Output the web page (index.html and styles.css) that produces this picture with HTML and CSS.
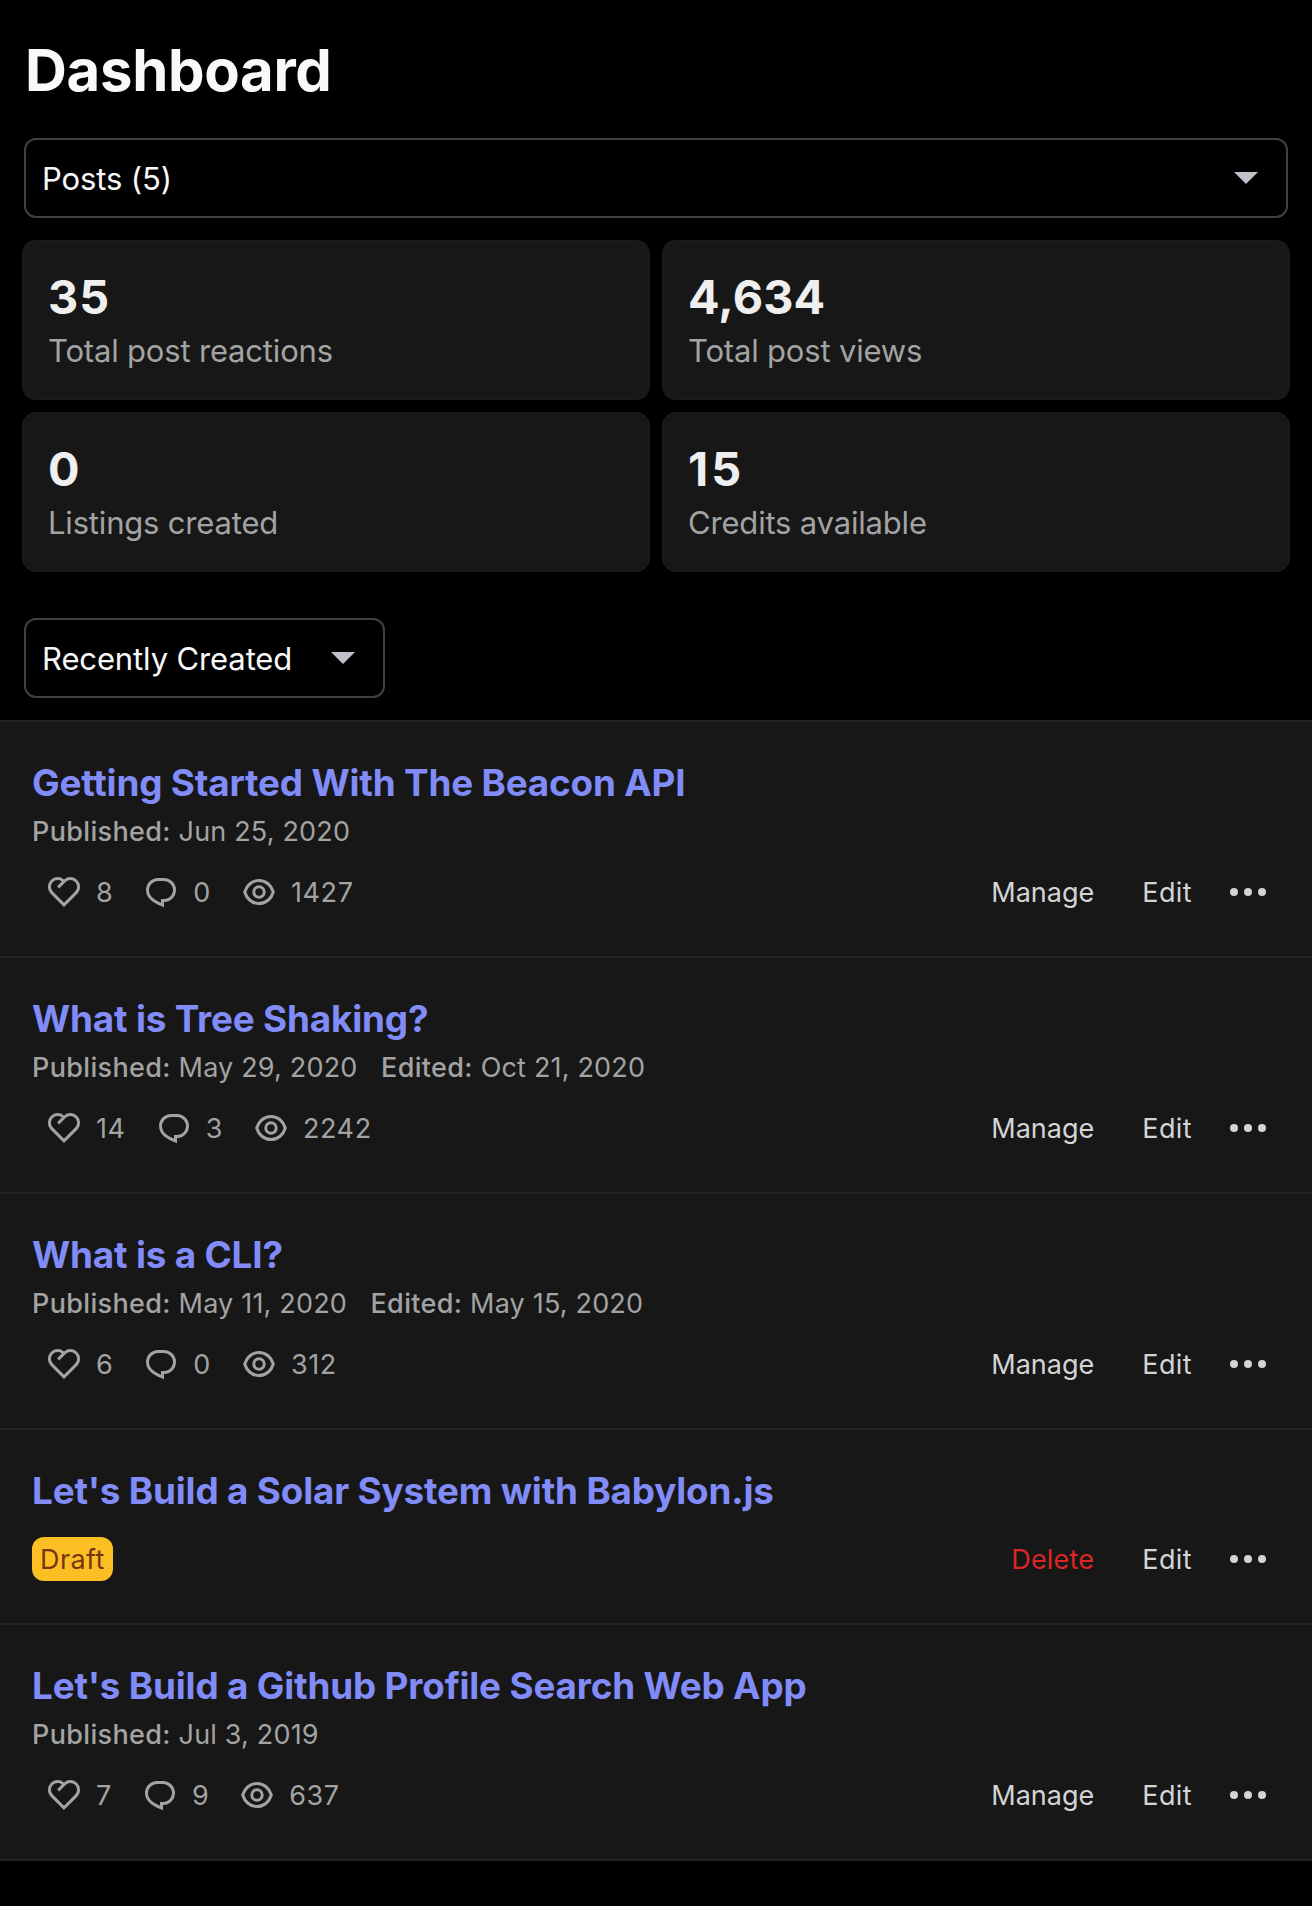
FILE: index.html
```html
<!DOCTYPE html>
<html lang="en">
<head>
<meta charset="utf-8">
<title>Dashboard</title>
<link rel="stylesheet" href="styles.css">
</head>
<body>
<svg class="sprite" width="0" height="0" aria-hidden="true">
  <symbol id="heart" viewBox="0 0 24 24"><path d="M18.884 12.595l.01.011L12 19.5l-6.894-6.894.01-.01A4.875 4.875 0 0112 5.73a4.875 4.875 0 016.884 6.865zM6.431 7.037a3.375 3.375 0 000 4.773L12 17.38l5.569-5.569a3.375 3.375 0 10-4.773-4.773L9.613 10.22l-1.06-1.062 2.371-2.372a3.375 3.375 0 00-4.492.25v.001z"/></symbol>
  <symbol id="comment" viewBox="0 0 24 24"><path d="M10.5 5h3a6 6 0 110 12v2.625c-3.75-1.5-9-3.75-9-8.625a6 6 0 016-6zM12 15.5h1.5a4.501 4.501 0 001.722-8.657A4.5 4.5 0 0013.5 6.5h-3A4.5 4.5 0 006 11c0 2.707 1.846 4.475 6 6.36V15.5z"/></symbol>
  <symbol id="eye" viewBox="0 0 24 24"><g fill="none" stroke="currentColor" stroke-width="1.5"><path d="M4.85 12C5.8 8.7 8.5 6.25 12 6.25S18.2 8.7 19.15 12C18.2 15.3 15.5 17.75 12 17.75S5.8 15.3 4.85 12z"/><circle cx="12" cy="12" r="2.6"/></g></symbol>
  <symbol id="dots" viewBox="0 0 36 8"><circle cx="4" cy="4" r="4"/><circle cx="18" cy="4" r="4"/><circle cx="32" cy="4" r="4"/></symbol>
  <symbol id="caret" viewBox="0 0 24 12"><path d="M0 0h24L12 12z"/></symbol>
</svg>
<header class="header">
  <h1 class="heading">Dashboard</h1>
  <div class="select"><span>Posts (5)</span><svg class="caret"><use href="#caret"/></svg></div>
</header>
<section class="stats">
  <div class="card"><div class="value value-wide">35</div><div class="label">Total post reactions</div></div>
  <div class="card"><div class="value">4,634</div><div class="label">Total post views</div></div>
  <div class="card"><div class="value">0</div><div class="label">Listings created</div></div>
  <div class="card"><div class="value value-wider">15</div><div class="label">Credits available</div></div>
</section>
<div class="sorting"><div class="select select-sort"><span>Recently Created</span><svg class="caret"><use href="#caret"/></svg></div></div>
<main class="list">
  <article class="row">
    <h2 class="title">Getting Started With The Beacon API</h2>
    <p class="dates"><span><b>Published:</b> Jun 25, 2020</span></p>
    <div class="foot">
      <div class="metrics"><span class="metric"><svg class="icon"><use href="#heart"/></svg>8</span><span class="metric"><svg class="icon"><use href="#comment"/></svg>0</span><span class="metric"><svg class="icon"><use href="#eye"/></svg>1427</span></div>
      <div class="actions"><a>Manage</a><a class="edit">Edit</a><svg class="dots"><use href="#dots"/></svg></div>
    </div>
  </article>
  <article class="row">
    <h2 class="title">What is Tree Shaking?</h2>
    <p class="dates"><span><b>Published:</b> May 29, 2020</span><span><b>Edited:</b> Oct 21, 2020</span></p>
    <div class="foot">
      <div class="metrics"><span class="metric"><svg class="icon"><use href="#heart"/></svg>14</span><span class="metric"><svg class="icon"><use href="#comment"/></svg>3</span><span class="metric"><svg class="icon"><use href="#eye"/></svg>2242</span></div>
      <div class="actions"><a>Manage</a><a class="edit">Edit</a><svg class="dots"><use href="#dots"/></svg></div>
    </div>
  </article>
  <article class="row">
    <h2 class="title">What is a CLI?</h2>
    <p class="dates"><span><b>Published:</b> May 11, 2020</span><span><b>Edited:</b> May 15, 2020</span></p>
    <div class="foot">
      <div class="metrics"><span class="metric"><svg class="icon"><use href="#heart"/></svg>6</span><span class="metric"><svg class="icon"><use href="#comment"/></svg>0</span><span class="metric"><svg class="icon"><use href="#eye"/></svg>312</span></div>
      <div class="actions"><a>Manage</a><a class="edit">Edit</a><svg class="dots"><use href="#dots"/></svg></div>
    </div>
  </article>
  <article class="row row-draft">
    <h2 class="title">Let's Build a Solar System with Babylon.js</h2>
    <div class="foot">
      <span class="badge">Draft</span>
      <div class="actions"><a class="delete">Delete</a><a class="edit">Edit</a><svg class="dots"><use href="#dots"/></svg></div>
    </div>
  </article>
  <article class="row">
    <h2 class="title">Let's Build a Github Profile Search Web App</h2>
    <p class="dates"><span><b>Published:</b> Jul 3, 2019</span></p>
    <div class="foot">
      <div class="metrics"><span class="metric"><svg class="icon"><use href="#heart"/></svg>7</span><span class="metric"><svg class="icon"><use href="#comment"/></svg>9</span><span class="metric"><svg class="icon"><use href="#eye"/></svg>637</span></div>
      <div class="actions"><a>Manage</a><a class="edit">Edit</a><svg class="dots"><use href="#dots"/></svg></div>
    </div>
  </article>
</main>
</body>
</html>
```
FILE: styles.css
```css
* { box-sizing: border-box; }
body {
  margin: 0;
  background: #000;
  color: #f9f9f9;
  font-family: Inter, "Liberation Sans", sans-serif;
  font-size: 27px;
}
h1, h2, p { margin: 0; }
svg { display: block; fill: currentColor; }
.sprite { position: absolute; }

.header { padding: 34px 24px 0; }
.heading { margin-bottom: 32px; padding-left: 1px; font-size: 58px; line-height: 72px; font-weight: 700; letter-spacing: -0.3px; }
.select {
  display: flex;
  align-items: center;
  justify-content: space-between;
  height: 80px;
  padding: 1px 28px 0 16px;
  border: 2px solid #404040;
  border-radius: 12px;
  font-size: 31px;
  letter-spacing: -0.12px;
}
.caret { width: 24px; height: 12px; margin-top: -1px; color: #bfc3c9; }

.stats {
  display: grid;
  grid-template-columns: 1fr 1fr;
  gap: 12px;
  padding: 22px 22px 46px;
}
.card {
  padding: 26px 24px 23px;
  border: 2px solid #1a1a1a;
  border-radius: 14px;
  background: #171717;
}
.value { margin-bottom: 1px; color: #efefef; font-size: 46.8px; line-height: 58px; font-weight: 700; letter-spacing: 0.15px; }
.value-wide { letter-spacing: 1px; }
.value-wider { letter-spacing: 3px; }
.label { color: #a3a3a3; font-size: 31px; line-height: 48px; letter-spacing: -0.18px; }

.sorting { padding: 0 24px 22px; }
.select-sort { width: 361px; }

.list { border-top: 2px solid #232323; background: #171717; }
.row { padding: 38px 32px 40px; border-bottom: 2px solid #232323; }
.title { color: #818cf8; font-size: 36.8px; line-height: 46px; font-weight: 700; letter-spacing: -0.15px; white-space: nowrap; }
.dates { display: flex; gap: 23.5px; margin: 6px 0 16px; color: #a3a3a3; line-height: 40px; letter-spacing: 0.18px; }
.dates b { font-weight: 500; letter-spacing: 0.34px; }
.foot { display: flex; align-items: center; justify-content: space-between; height: 48px; }
.row-draft .foot { margin-top: 21px; }
.metrics { display: flex; gap: 24px; padding-left: 8px; color: #a3a3a3; letter-spacing: 0.6px; }
.metric { display: flex; align-items: center; gap: 8px; }
.icon { width: 48px; height: 48px; }
.actions { display: flex; align-items: center; gap: 48px; padding-right: 14px; color: #d4d4d4; }
.edit { letter-spacing: 0.4px; }
.dots { width: 36px; height: 8px; margin-left: -10px; }
.delete { color: #dc2626; letter-spacing: 0.2px; }
.badge {
  height: 44px;
  padding: 1px 8px 0;
  border-radius: 12px;
  background: #fbbf24;
  color: #78350f;
  line-height: 43px;
  letter-spacing: 0.4px;
}
```
